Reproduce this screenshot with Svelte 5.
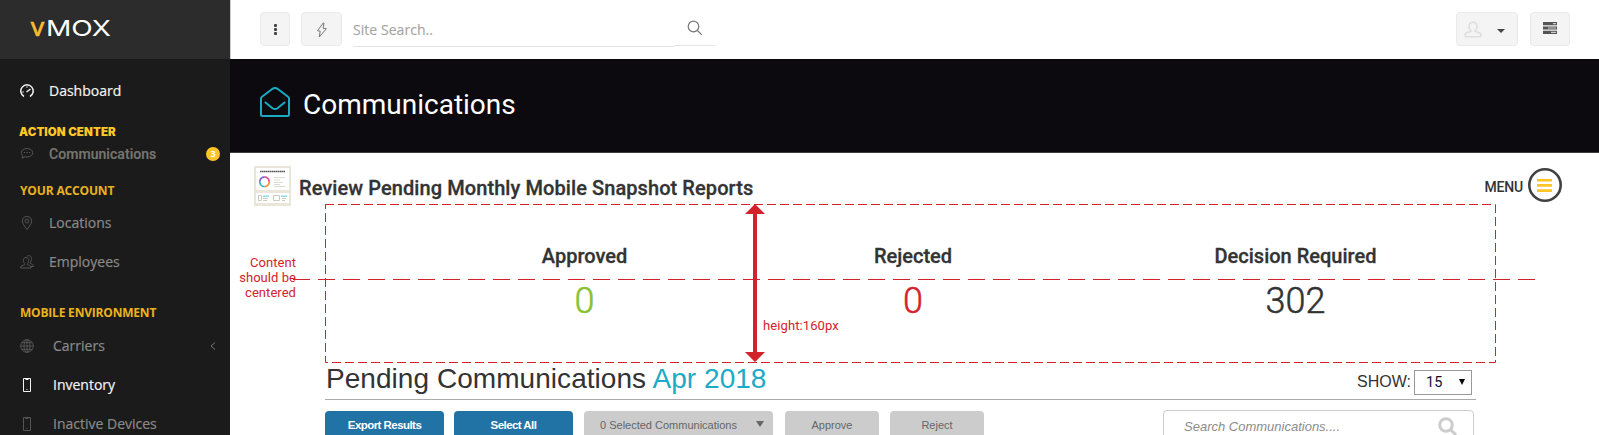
<script>
  const stats = [
    { label: 'Approved', value: '0', tone: 'green' },
    { label: 'Rejected', value: '0', tone: 'red' },
    { label: 'Decision Required', value: '302', tone: 'dark' }
  ];
</script>

{#snippet phone()}
  <svg class="ico" viewBox="0 0 14 14"><path d="M3.5.5h7v13h-7zM5.5 1.5h3M6.5 11.5h1" /></svg>
{/snippet}

<div class="page">
  <aside class="sidebar">
    <div class="brand">
      <svg width="84" height="30" viewBox="0 -7 84 30">
        <text x="0" y="17" class="v" textLength="15" lengthAdjust="spacingAndGlyphs">v</text>
        <text x="16" y="17" class="mox" textLength="65" lengthAdjust="spacingAndGlyphs">MOX</text>
      </svg>
    </div>
    <nav>
      <a class="row bright dash" href="#dashboard">
        <svg class="ico" viewBox="0 0 14 14"><path stroke-width="1.5" d="M4 12.5A6.2 6.2 0 1 1 10 12.5M6.5 8l4-3M2.5 8h1M7 2.5v1" /></svg>
        <span>Dashboard</span>
      </a>
      <h4 class="action">ACTION CENTER</h4>
      <a class="row comm" href="#communications">
        <svg class="ico" viewBox="0 0 14 14"><path d="M7 1.5c3.400 0 5.700 1.900 5.700 4.200S10.400 10 7 10c-.8 0-1.400-.1-2-.3L2 11.300l.8-2.500C1.800 8 1.300 6.900 1.300 5.700 1.300 3.400 3.600 1.500 7 1.500zM3.800 5.500h1.400M6.300 5.500h1.400M8.800 5.500h1.400" /></svg>
        <span>Communications</span>
        <b class="badge">3</b>
      </a>
      <h4 class="account">YOUR ACCOUNT</h4>
      <a class="row" href="#locations">
        <svg class="ico" viewBox="0 0 14 14"><path d="M7 13.500C4.500 10 2.300 7.500 2.300 5a4.700 4.700 0 0 1 9.400 0c0 2.500-2.200 5-4.700 8.500z" /><circle cx="7" cy="5" r="2" /></svg>
        <span>Locations</span>
      </a>
      <a class="row" href="#employees">
        <svg class="ico" viewBox="0 0 14 14"><path d="M.5 13c0-2.500 2.500-2.500 4-3.200V8.500C2.500 6.500 3 2.500 6 2.500s3.500 4 1.500 6v1.300c1.500.7 3.500.7 3.500 3.200zM7 1.500C8 .2 11.300.2 11.500 3.500c0 1.700-.5 3-1.300 3.700v1.300c1.500.7 3.300 1 3.300 3H11" /></svg>
        <span>Employees</span>
      </a>
      <h4 class="mobile">MOBILE ENVIRONMENT</h4>
      <a class="row wide" href="#carriers">
        <svg class="ico" viewBox="0 0 14 14"><circle cx="7" cy="7" r="6.300" /><ellipse cx="7" cy="7" rx="3" ry="6.300" /><path d="M.7 7h12.600M7 .7v12.600M1.700 3.700h10.600M1.700 10.300h10.600" /></svg>
        <span>Carriers</span>
        <svg class="chev" viewBox="0 0 6 8"><path d="M5 .5L1 4l4 3.500" /></svg>
      </a>
      <a class="row wide bright" href="#inventory">{@render phone()}<span>Inventory</span></a>
      <a class="row wide" href="#inactive">{@render phone()}<span>Inactive Devices</span></a>
    </nav>
  </aside>

  <main>
    <header class="topbar">
      <button class="sq dots" aria-label="More"><i></i><i></i><i></i></button>
      <button class="sq bolt" aria-label="Quick actions">
        <svg width="12" height="16" viewBox="0 0 12 16"><path d="M7.200 1L1.500 8.700l2.700.5L3.300 15l7-8.300-3.200-.5L8 1z" /></svg>
      </button>
      <div class="site">Site Search..</div>
      <div class="go">
        <svg width="16" height="16" viewBox="0 0 16 16"><circle cx="6.500" cy="6.500" r="5.300" /><path d="M10.500 10.500L14.800 14.800" /></svg>
      </div>
      <button class="sq user" aria-label="Account">
        <svg width="18" height="17" viewBox="0 0 18 17"><path d="M9 1.200c2.600 0 3.900 1.900 3.900 4.300 0 2-.8 3.600-1.900 4.500.2.900 1 .9 2.600 1.200 2.200.4 3.400 1.100 3.400 2.800 0 1.200-.6 1.800-1.800 1.800H2.800C1.600 15.800 1 15.200 1 14c0-1.700 1.200-2.400 3.400-2.800 1.600-.3 2.400-.3 2.600-1.200-1.100-.9-1.900-2.500-1.900-4.500 0-2.400 1.300-4.300 3.900-4.300z" /></svg>
        <i class="caret"></i>
      </button>
      <button class="sq tasks" aria-label="Tasks">
        <svg width="14" height="12" viewBox="0 0 14 12"><path fill="#555" d="M0 0h14v3.200H0zM0 4.400h14v3.200H0zM0 8.800h14V12H0z" /><path fill="#ccc" d="M10 1h3v1.200h-3zM5 5.400h8v1.200H5zM8 9.800h5V11H8z" /></svg>
      </button>
    </header>

    <section class="title">
      <svg width="30" height="30" viewBox="0 0 30 30"><path d="M1 11.500Q1 10.500 2 9.700L12.500 1.800Q15 .2 17.500 1.800L28 9.700Q29 10.500 29 11.500V27.500Q29 29 27.500 29H2.500Q1 29 1 27.500zM5.500 15.500l7 5.700Q15 23 17.500 21.200l7-5.700" /></svg>
      <h1>Communications</h1>
    </section>

    <section class="report">
      <svg class="thumb" width="37" height="40" viewBox="0 0 37 40">
        <path fill="#eae6da" d="M0 0h37v40H0z" /><path fill="#fff" d="M2 2h33v22H2zM2 27h33v10H2z" />
        <path stroke="#555" stroke-width="1.300" stroke-dasharray="1.600 .4" d="M6 5.500h25" />
        <g fill="none" stroke-width="1.800"><path stroke="#e8508a" d="M10.500 11a4.800 4.800 0 0 1 4.700 4.800" /><path stroke="#f28c38" d="M15.200 15.800a4.800 4.800 0 0 1-4.700 4.800" /><path stroke="#35b8c8" d="M10.500 20.600a4.800 4.800 0 0 1-4.700-4.800" /><path stroke="#7d68d8" d="M5.800 15.800a4.800 4.800 0 0 1 4.700-4.800" /></g>
        <path stroke="#dcd9cf" d="M20 11.500h11M20 14h6M20 16.500h9M20 18.500h6M20 20.500h11" />
        <path stroke="#cfcabc" fill="none" d="M4.500 29.500h3v5h-3zM19.500 29.500h6v5h-6zM9 32.500h5M9 34.500h4M28 32.500h4M28 34.500h3" /><path stroke="#8ddbea" stroke-width="1.500" d="M9 30.300h6M27 30.300h6" />
      </svg>
      <h2>Review Pending Monthly Mobile Snapshot Reports</h2>
      <span class="menu">MENU</span>
      <svg class="burger" width="34" height="34" viewBox="0 0 34 34"><circle cx="17" cy="17" r="15.700" /><path d="M9 12.200h15M9 17.400h15M9 22.600h15" /></svg>
    </section>

    <section class="stats">
      {#each stats as s}
        <div class="stat"><h3>{s.label}</h3><span class={s.tone}>{s.value}</span></div>
      {/each}
    </section>

    <section class="pending">
      <h2>Pending Communications <em>Apr 2018</em></h2>
      <span class="show">SHOW:</span>
      <span class="select"><span>15</span><i></i></span>
    </section>

    <section class="tools">
      <button class="btn blue">Export Results</button>
      <button class="btn blue">Select All</button>
      <button class="btn sel"><span>0 Selected Communications</span><i></i></button>
      <button class="btn grey">Approve</button>
      <button class="btn grey">Reject</button>
      <div class="find">
        <span>Search Communications....</span>
        <svg width="20" height="20" viewBox="0 0 20 20"><circle cx="8" cy="8" r="6.300" /><path d="M12.500 12.500L18 18" /></svg>
      </div>
    </section>
  </main>

  <svg class="notes" width="1599" height="435" viewBox="0 0 1599 435">
    <path stroke-dasharray="9 4" d="M325 204.500H1495.500V362.500H325.500V204.500" />
    <path stroke-dasharray="17 8" d="M293 279.500H1535" />
    <path class="shaft" d="M755 210V356" />
    <path class="head" d="M755 204l10 10h-20zM755 362l10-10h-20z" />
  </svg>
  <p class="note centered">Content<br />should be<br />centered</p>
  <p class="note height">height:160px</p>
</div>

<style>
  :global(body) { margin: 0; background: #fff; }
  .page { position: relative; width: 1599px; height: 435px; overflow: hidden; display: flex; font-family: Roboto, sans-serif; color: #333; }
  .page * { box-sizing: border-box; }
  h1, h2, h3, h4, p { margin: 0; }
  button { font: inherit; padding: 0; border: 0; }
  svg { display: block; flex: none; }
  span, h1, h2, h3, h4, p { white-space: nowrap; }

  .sidebar { width: 230px; flex: none; background: #1b1b1b; height: 435px; overflow: hidden; }
  .brand { height: 59px; background: #2c2c2c; padding: 12px 0 0 30px; }
  .brand svg { overflow: visible; }
  .brand text { font-family: Inter, sans-serif; font-size: 22px; font-weight: 400; }
  .brand .v { fill: #fbbd30; stroke: #fbbd30; stroke-width: .5; font-size: 25px; }
  .brand .mox { fill: #fff; }
  .row { display: flex; align-items: center; height: 39px; padding-left: 20px; color: #8a8a8a; text-decoration: none; font: 14px/39px "Open Sans", sans-serif; -webkit-text-stroke: .2px; }
  .row span { margin-left: 15px; }
  .row.wide span { margin-left: 19px; }
  .row.bright { color: #f4f4f4; }
  .row.bright .ico { stroke: #f4f4f4; }
  .dash { margin-top: 12px; }
  .ico { width: 14px; height: 14px; fill: none; stroke: #555; stroke-width: 1; }
  .chev { width: 6px; height: 8px; margin-left: auto; margin-right: 14px; fill: none; stroke: #777; }
  h4 { color: #ebb21f; font: 700 12px/16px "Open Sans", sans-serif; padding-left: 20px; }
  .action { color: #ffc727; font: 900 11.500px/16px Inter, sans-serif; padding-left: 19px; margin-top: 14px; letter-spacing: .1px; }
  .comm { height: 24px; margin-top: 2px; font: 500 14px/24px Roboto, sans-serif; color: #77756f; letter-spacing: .05px; }
  .badge { width: 14px; height: 14px; border-radius: 50%; background: #ffc425; color: #fff; font: 700 9px/14px "Open Sans", sans-serif; letter-spacing: 0; text-align: center; margin-left: auto; margin-right: 10px; -webkit-text-stroke: 0; }
  .account { margin: 17px 0 4px; letter-spacing: -.15px; }
  .mobile { margin: 24px 0 5px; letter-spacing: -.2px; }

  main { flex: 1; min-width: 0; }
  .topbar { height: 59px; border-left: 1px solid #ccc; padding: 12px 29px 0 29px; display: flex; align-items: flex-start; }
  .sq { height: 34px; border: 1px solid #eaeaea; border-radius: 4px; background: #f4f4f4; display: flex; align-items: center; justify-content: center; }
  .dots { width: 30px; flex-direction: column; gap: 1px; margin-right: 11px; }
  .dots i { width: 3px; height: 3px; background: #444; border-radius: 1px; }
  .bolt { width: 41px; margin-right: 11px; }
  .bolt svg { fill: none; stroke: #777; margin-top: 2px; }
  .site { width: 322px; height: 35px; border-bottom: 1px solid #e4e4e4; color: #a5a5a5; font: 14px/36px "Open Sans", sans-serif; letter-spacing: .05px; -webkit-text-stroke: .15px; }
  .go { width: 40px; height: 34px; border-bottom: 1px solid #e4e4e4; padding: 8px 0 0 12px; }
  .go svg { fill: none; stroke: #777; stroke-width: 1.200; }
  .user { width: 62px; margin-left: auto; justify-content: space-between; padding: 0 12px 0 7px; }
  .user svg { fill: none; stroke: #ddd; stroke-width: 1.500; }
  .caret { border: 4px solid transparent; border-top-color: #444; border-bottom: 0; margin-top: 3px; }
  .tasks { width: 40px; margin-left: 12px; }
  .tasks svg { margin-top: -2px; }

  .title { height: 94px; background: #0c0a0f; border-bottom: 1px solid #3c3b3e; display: flex; padding: 28px 0 0 30px; }
  .title svg { fill: none; stroke: #18abc2; stroke-width: 2; stroke-linecap: round; }
  .title h1 { font: 400 28px/34px Roboto, sans-serif; color: #fff; margin: 1px 0 0 13px; }

  .report { height: 51px; display: flex; padding: 13px 37px 0 24px; }
  .report h2 { font: 500 20px/24px Roboto, sans-serif; margin: 10px 0 0 8px; letter-spacing: .08px; -webkit-text-stroke: .3px; }
  .menu { margin: 13px 5px 0 auto; font: 500 14px/16px Roboto, sans-serif; letter-spacing: -.2px; }
  .burger { margin-top: 2px; fill: none; stroke: #414141; stroke-width: 2.600; }
  .burger path { stroke: #ffc425; }

  .stats { height: 159px; padding: 40px 0 0 190px; display: grid; grid-template-columns: 329px 328px 437px; }
  .stat { display: flex; flex-direction: column; align-items: center; }
  .stat h3 { font: 500 20px/24px Roboto, sans-serif; -webkit-text-stroke: .3px; }
  .stat span { font: 300 36px/42px Roboto, sans-serif; margin-top: 12px; -webkit-text-stroke: .5px; }
  .green { color: #86c232; } .red { color: #d2232a; } .dark { color: #333; }

  .pending { height: 37px; margin: 0 123px 0 95px; border-bottom: 1px solid #aaa; display: flex; align-items: flex-start; }
  .pending h2 { font: 400 28px/32px "Liberation Sans", sans-serif; margin-left: 1px; letter-spacing: .05px; }
  .pending em { font-style: normal; color: #1caac6; }
  .show { margin: 9px 3px 0 auto; font: 16px/20px "Liberation Sans", sans-serif; }
  .select { width: 58px; height: 25px; border: 1px solid #999; margin: 7px 4px 0 0; padding: 0 6px 1px 11px; display: flex; align-items: center; justify-content: space-between; font-size: 14.500px; color: #113; }
  .select i { border: 3px solid transparent; border-top: 6px solid #000; border-bottom: 0; }

  .tools { margin: 11px 124px 0 95px; height: 32px; display: flex; align-items: flex-start; font-family: "Liberation Sans", sans-serif; font-size: 11px; }
  .btn { height: 32px; border-radius: 4px; background: #ccc; color: #666; line-height: 29px; padding-bottom: 3px; }
  .blue { width: 119px; margin-right: 10px; background: #2273a5; color: #fff; font-size: 11.500px; font-weight: 700; letter-spacing: -.55px; }
  .sel { width: 189px; margin-left: 1px; display: flex; justify-content: space-between; padding: 0 9px 0 16px; }
  .sel i { border: 4px solid transparent; border-top: 6px solid #666; border-bottom: 0; margin-top: 10px; }
  .grey { width: 94px; margin-left: 11px; }
  .sel + .grey { margin-left: 12px; }
  .find { width: 311px; height: 36px; margin: -1px 1px 0 auto; border: 1px solid #ccc; border-radius: 4px; display: flex; justify-content: space-between; padding: 6px 15px 0 20px; color: #8c8c8c; font-style: italic; font-size: 13px; line-height: 20px; }
  .find svg { fill: none; stroke: #ccc; stroke-width: 3; }

  .notes { position: absolute; left: 0; top: 0; pointer-events: none; fill: none; stroke: #d2232a; stroke-width: 1; }
  .notes .shaft { stroke-width: 4; }
  .notes .head { fill: #d2232a; stroke: none; }
  .note { position: absolute; color: #d2232a; font: 13px/15px Roboto, sans-serif; }
  .centered { right: 1303px; top: 255px; text-align: right; letter-spacing: .05px; }
  .height { left: 763px; top: 318px; letter-spacing: .1px; }
</style>
